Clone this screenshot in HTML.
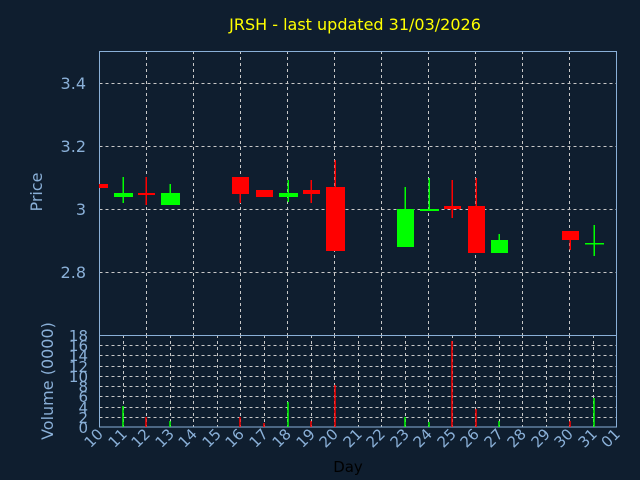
<!DOCTYPE html>
<html><head><style>html,body{margin:0;padding:0;background:#0f1e2f;}svg{display:block}</style></head><body>
<svg width="640" height="480" xmlns="http://www.w3.org/2000/svg" font-family="DejaVu Sans, Liberation Sans, sans-serif">
<rect width="640" height="480" fill="#0f1e2f"/>
<text x="355" y="30" fill="#ffff00" font-size="16" text-anchor="middle">JRSH - last updated 31/03/2026</text>
<g stroke="#c8c8c8" stroke-width="1" stroke-dasharray="3,3">
<path d="M99.5 83.5H617M99.5 146.5H617M99.5 209.5H617M99.5 272.5H617"/>
<path d="M146.5 51V335M193.5 51V335M240.5 51V335M287.5 51V335M334.5 51V335M381.5 51V335M428.5 51V335M475.5 51V335M522.5 51V335M569.5 51V335"/>
<path d="M99.5 345.5H617M99.5 355.5H617M99.5 366.5H617M99.5 376.5H617M99.5 386.5H617M99.5 396.5H617M99.5 407.5H617M99.5 417.5H617"/>
<path d="M123.5 335V427M146.5 335V427M170.5 335V427M193.5 335V427M217.5 335V427M240.5 335V427M264.5 335V427M287.5 335V427M311.5 335V427M334.5 335V427M358.5 335V427M381.5 335V427M405.5 335V427M428.5 335V427M452.5 335V427M475.5 335V427M499.5 335V427M522.5 335V427M546.5 335V427M569.5 335V427M593.5 335V427"/>
</g>
<g stroke="#8ab0d8" fill="none" stroke-width="1">
<rect x="99.5" y="51.5" width="517" height="375.5"/>
<path d="M99.5 335.5H617"/>
</g>
<g fill="#ff0000">
<rect x="99" y="184" width="9" height="4"/>
<rect x="138" y="193" width="17" height="2"/><rect x="145.5" y="177" width="1.5" height="28"/>
<rect x="232" y="177" width="17" height="17"/><rect x="239.5" y="194" width="1.5" height="9"/>
<rect x="256" y="190" width="17" height="7"/>
<rect x="303" y="190" width="17" height="4"/><rect x="310.5" y="180" width="1.5" height="23"/>
<rect x="326" y="187" width="19" height="64"/><rect x="334.5" y="160" width="1.5" height="27"/>
<rect x="444" y="206" width="17" height="3"/><rect x="451.5" y="180" width="1.5" height="38"/>
<rect x="468" y="206" width="17" height="47"/><rect x="475.5" y="178" width="1.5" height="28"/>
<rect x="562" y="231" width="17" height="9"/><rect x="569.5" y="240" width="1.5" height="10"/>
</g>
<g fill="#00ff00">
<rect x="114" y="193" width="19" height="4"/><rect x="122.5" y="177" width="1.5" height="26"/>
<rect x="161" y="193" width="19" height="12"/><rect x="169.5" y="184" width="1.5" height="9"/>
<rect x="279" y="193" width="19" height="4"/><rect x="287.5" y="180" width="1.5" height="22"/>
<rect x="397" y="209" width="17" height="38"/><rect x="404.5" y="187" width="1.5" height="22"/>
<rect x="420" y="209" width="19" height="2"/><rect x="428.5" y="178" width="1.5" height="33"/>
<rect x="491" y="240" width="17" height="13"/><rect x="498.5" y="234" width="1.5" height="6"/>
<rect x="585" y="243" width="19" height="1.5"/><rect x="593.5" y="225" width="1.5" height="31"/>
</g>
<g stroke-width="1.5">
<path stroke="#00ff00" d="M123 427V406M170 427V421M288 427V402M405 427V417M429 427V422M499 427V421M594 427V398"/>
<path stroke="#ff0000" d="M146 427V417M240 427V417M264 427V423M311 427V421M335 427V385M452 427V341M476 427V409M570 427V421"/>
</g>
<g fill="#8ab0d8" font-size="16" text-anchor="end">
<text x="86" y="89">3.4</text><text x="86" y="152">3.2</text><text x="86" y="215">3</text><text x="86" y="278">2.8</text>
<g font-size="15"><text x="88" y="341">18</text><text x="88" y="351">16</text><text x="88" y="361">14</text><text x="88" y="372">12</text><text x="88" y="382">10</text><text x="88" y="392">8</text><text x="88" y="402">6</text><text x="88" y="413">4</text><text x="88" y="423">2</text><text x="88" y="433">0</text></g>
</g>
<text transform="translate(42,192) rotate(-90)" fill="#8ab0d8" font-size="16" text-anchor="middle">Price</text>
<text transform="translate(53,381) rotate(-90)" fill="#8ab0d8" font-size="16" text-anchor="middle">Volume (0000)</text>
<g fill="#8ab0d8" font-size="15">
<text transform="translate(104,435) rotate(-45)" text-anchor="end">10</text>
<text transform="translate(128,435) rotate(-45)" text-anchor="end">11</text>
<text transform="translate(151,435) rotate(-45)" text-anchor="end">12</text>
<text transform="translate(175,435) rotate(-45)" text-anchor="end">13</text>
<text transform="translate(198,435) rotate(-45)" text-anchor="end">14</text>
<text transform="translate(222,435) rotate(-45)" text-anchor="end">15</text>
<text transform="translate(245,435) rotate(-45)" text-anchor="end">16</text>
<text transform="translate(269,435) rotate(-45)" text-anchor="end">17</text>
<text transform="translate(292,435) rotate(-45)" text-anchor="end">18</text>
<text transform="translate(316,435) rotate(-45)" text-anchor="end">19</text>
<text transform="translate(339,435) rotate(-45)" text-anchor="end">20</text>
<text transform="translate(363,435) rotate(-45)" text-anchor="end">21</text>
<text transform="translate(386,435) rotate(-45)" text-anchor="end">22</text>
<text transform="translate(410,435) rotate(-45)" text-anchor="end">23</text>
<text transform="translate(433,435) rotate(-45)" text-anchor="end">24</text>
<text transform="translate(457,435) rotate(-45)" text-anchor="end">25</text>
<text transform="translate(480,435) rotate(-45)" text-anchor="end">26</text>
<text transform="translate(504,435) rotate(-45)" text-anchor="end">27</text>
<text transform="translate(527,435) rotate(-45)" text-anchor="end">28</text>
<text transform="translate(551,435) rotate(-45)" text-anchor="end">29</text>
<text transform="translate(574,435) rotate(-45)" text-anchor="end">30</text>
<text transform="translate(598,435) rotate(-45)" text-anchor="end">31</text>
<text transform="translate(621,435) rotate(-45)" text-anchor="end">01</text>
</g>
<text x="348" y="472" fill="#000000" font-size="15" text-anchor="middle">Day</text>
</svg>
</body></html>
